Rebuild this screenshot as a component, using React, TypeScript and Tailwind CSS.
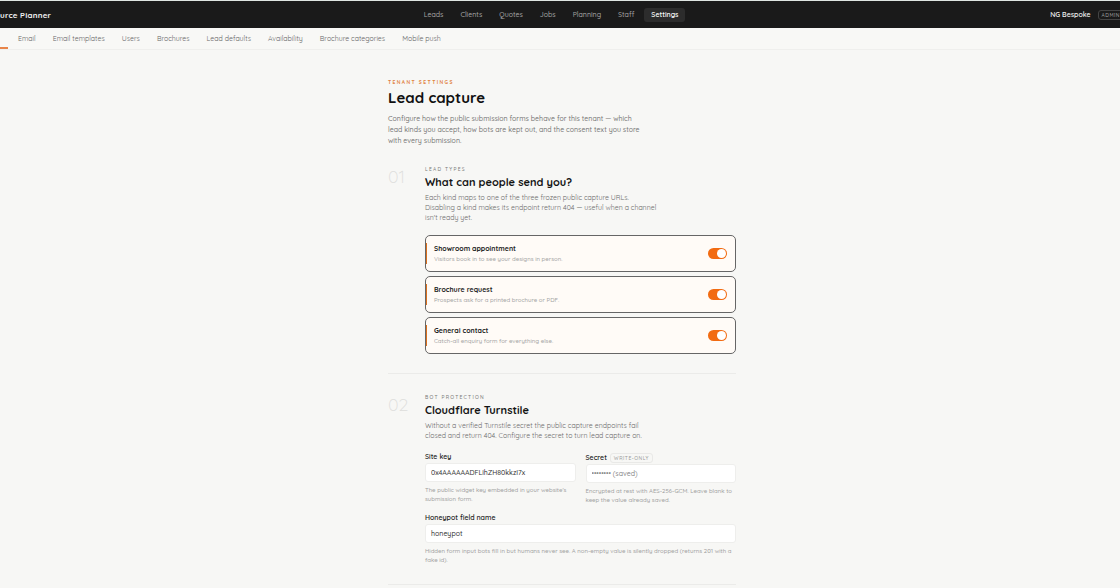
import type { ReactNode } from 'react';

const mainLinks = ['Leads', 'Clients', 'Quotes', 'Jobs', 'Planning', 'Staff', 'Settings'];

const subLinks = [
  'Email',
  'Email templates',
  'Users',
  'Brochures',
  'Lead defaults',
  'Availability',
  'Brochure categories',
  'Mobile push',
];

const kinds = [
  { id: 'showroom', title: 'Showroom appointment', text: 'Visitors book in to see your designs in person.' },
  { id: 'brochure', title: 'Brochure request', text: 'Prospects ask for a printed brochure or PDF.' },
  { id: 'contact', title: 'General contact', text: 'Catch-all enquiry form for everything else.' },
];

function Header() {
  return (
    <header className="grid h-7 grid-cols-[1fr_auto_1fr] items-center overflow-hidden border-t border-[#dfe5e2] bg-[#1a1a1a]">
      <div className="text-[8px] leading-3 font-bold tracking-wide whitespace-nowrap text-[#f2f2f2]">
        urce Planner
      </div>
      <nav aria-label="Main" className="flex items-center gap-[3px] pr-[18px]">
        {mainLinks.map((name) => (
          <a
            key={name}
            href="#"
            aria-current={name === 'Settings' ? 'page' : undefined}
            className={
              name === 'Settings'
                ? 'rounded-[3px] bg-[#2c2c2c] px-[7px] py-0.5 text-[7px] leading-[10px] font-semibold text-white'
                : 'rounded-[3px] px-[7px] py-0.5 text-[7px] leading-[10px] font-medium text-[#a3a3a3]'
            }
          >
            {name}
          </a>
        ))}
      </nav>
      <div className="flex items-center justify-end gap-[7px] whitespace-nowrap">
        <span className="text-[7px] leading-[10px] font-semibold text-[#f0f0f0]">NG Bespoke</span>
        <span className="-mr-1 rounded-[3px] border border-[#444] px-[3px] text-[5px] leading-2 font-medium tracking-[0.1em] text-[#a3a3a3]">
          ADMIN
        </span>
      </div>
    </header>
  );
}

function SubNav() {
  return (
    <nav aria-label="Settings" className="flex h-[22px] border-b border-[#efefed] bg-[#f8f8f6]">
      <span className="w-2 border-b-2 border-[#e8854a]" />
      <div className="flex items-center gap-[17px] pl-[10px]">
        {subLinks.map((name) => (
          <a key={name} href="#" className="text-[7px] leading-[10px] whitespace-nowrap text-[#666]">
            {name}
          </a>
        ))}
      </div>
    </nav>
  );
}

type SectionProps = {
  number: string;
  label: string;
  title: string;
  intro: ReactNode;
  children: ReactNode;
};

function Section({ number, label, title, intro, children }: SectionProps) {
  return (
    <section className="grid grid-cols-[37px_1fr] border-b border-[#ebebe9] pb-[19px]">
      <div className="pt-0.5 text-[18px] leading-5 font-light text-[#dededc]">{number}</div>
      <div>
        <p className="text-[5px] leading-2 font-medium tracking-[0.25em] text-[#777]">{label}</p>
        <h2 className="mt-px text-[11px] leading-4 font-bold text-[#141414]">{title}</h2>
        <p className="mt-[3px] text-[7px] leading-[10px] text-[#6c6c6c]">{intro}</p>
        {children}
      </div>
    </section>
  );
}

function KindRow({ id, title, text }: { id: string; title: string; text: string }) {
  return (
    <label
      htmlFor={id}
      className="relative flex h-[37px] items-center justify-between rounded-[5px] border border-[#666] bg-[#fffbf7] px-2"
    >
      <span className="absolute inset-y-[7px] left-0 w-px bg-[#d9701f]" />
      <span>
        <span className="block text-[7px] leading-[11px] font-bold text-[#222]">{title}</span>
        <span className="block text-[6px] leading-[11px] font-medium text-[#a3a3a3]">{text}</span>
      </span>
      <input
        id={id}
        type="checkbox"
        role="switch"
        defaultChecked
        className="flex h-[11px] w-[19px] appearance-none items-center rounded-full bg-[#c8c8c8] p-px before:size-[9px] before:rounded-full before:bg-white checked:justify-end checked:bg-[#f26b12]"
      />
    </label>
  );
}

const inputClass =
  'block h-[19px] w-full rounded-[3px] border border-[#eeeeec] bg-white px-[5px] text-[7px] leading-[10px] font-medium text-[#333] placeholder:text-[#888]';
const hintClass = 'mt-1 text-[6px] leading-[9px] font-medium text-[#a0a0a0]';
const fieldLabelClass = 'text-[7px] leading-[10px] font-semibold text-[#222]';

export default function App() {
  return (
    <div className="min-h-screen bg-[#f7f7f5] font-['Quicksand','Lato',sans-serif]">
      <Header />
      <SubNav />
      <main className="pl-1">
        <div className="mx-auto max-w-[348px] pt-7">
          <p className="text-[5px] leading-2 font-bold tracking-[0.28em] text-[#e0803c]">TENANT SETTINGS</p>
          <h1 className="mt-0.5 text-[15px] leading-5 font-bold text-[#101010]">Lead capture</h1>
          <p className="mt-[5px] mb-[19px] text-[7px] leading-[11px] font-medium text-[#777]">
            Configure how the public submission forms behave for this tenant — which
            <br />
            lead kinds you accept, how bots are kept out, and the consent text you store
            <br />
            with every submission.
          </p>

          <Section
            number="01"
            label="LEAD TYPES"
            title="What can people send you?"
            intro={
              <>
                Each kind maps to one of the three frozen public capture URLs.
                <br />
                Disabling a kind makes its endpoint return 404 — useful when a channel
                <br />
                isn't ready yet.
              </>
            }
          >
            <div className="mt-3 flex flex-col gap-1">
              {kinds.map((kind) => (
                <KindRow key={kind.id} {...kind} />
              ))}
            </div>
          </Section>

          <div className="pt-[19px]">
            <Section
              number="02"
              label="BOT PROTECTION"
              title="Cloudflare Turnstile"
              intro={
                <>
                  Without a verified Turnstile secret the public capture endpoints fail
                  <br />
                  closed and return 404. Configure the secret to turn lead capture on.
                </>
              }
            >
              <div className="mt-[11px] grid grid-cols-2 gap-x-[10px]">
                <div>
                  <div className="flex h-[11px] items-start">
                    <label htmlFor="site-key" className={fieldLabelClass}>
                      Site key
                    </label>
                  </div>
                  <input id="site-key" type="text" defaultValue="0x4AAAAAADFLihZH80kkzI7x" className={inputClass} />
                  <p className={hintClass}>
                    The public widget key embedded in your website's
                    <br />
                    submission form.
                  </p>
                </div>
                <div>
                  <div className="flex h-3 items-center gap-[3px]">
                    <label htmlFor="secret" className={fieldLabelClass}>
                      Secret
                    </label>
                    <span className="rounded-[3px] border border-[#e9e9e7] px-[3px] text-[5px] leading-2 font-medium tracking-[0.1em] text-[#999]">
                      WRITE-ONLY
                    </span>
                  </div>
                  <input id="secret" type="password" placeholder="•••••••• (saved)" className={inputClass} />
                  <p className={hintClass}>
                    Encrypted at rest with AES-256-GCM. Leave blank to
                    <br />
                    keep the value already saved.
                  </p>
                </div>
              </div>
              <div className="mt-2">
                <div className="flex h-[11px] items-start">
                  <label htmlFor="honeypot" className={fieldLabelClass}>
                    Honeypot field name
                  </label>
                </div>
                <input id="honeypot" type="text" defaultValue="honeypot" className={inputClass} />
                <p className={hintClass}>
                  Hidden form input bots fill in but humans never see. A non-empty value is silently dropped (returns 201
                  with a
                  <br />
                  fake id).
                </p>
              </div>
            </Section>
          </div>
        </div>
      </main>
    </div>
  );
}
